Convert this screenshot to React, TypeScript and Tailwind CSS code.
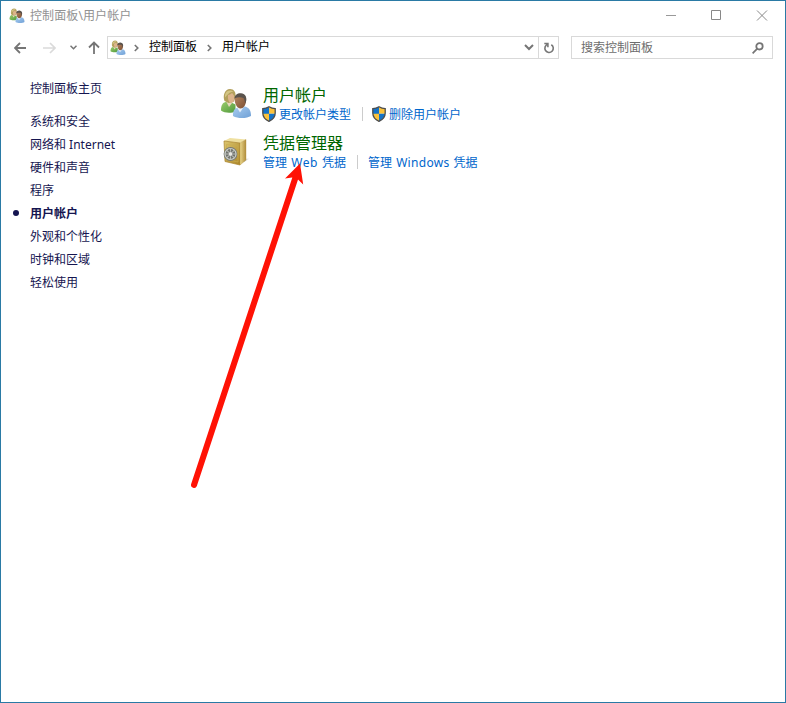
import React from "react";

function Users({ size }: { size: number }) {
  return (
    <svg width={size} height={size} viewBox="0 0 32 32" className="block shrink-0">
      <defs>
        <linearGradient id="green" x1="0" y1="0" x2="1" y2="1">
          <stop offset="0" stopColor="#9bcb6c" />
          <stop offset="1" stopColor="#4f9a3c" />
        </linearGradient>
        <linearGradient id="blue" x1="0" y1="0" x2="1" y2="1">
          <stop offset="0" stopColor="#a9cdf0" />
          <stop offset="1" stopColor="#6fa0d6" />
        </linearGradient>
        <linearGradient id="skin" x1="0" y1="0" x2="1" y2="1">
          <stop offset="0" stopColor="#b98a62" />
          <stop offset="1" stopColor="#7a4e33" />
        </linearGradient>
      </defs>
      <path d="M1 22.500c0-4.500 1-7.500 4.500-8.500l6 .5 4 2v7c-4 1.800-11 1.800-14.500-1z" fill="url(#green)" />
      <path d="M6 13l3 6 3-4z" fill="#e8d6bd" />
      <path d="M4.500 13C2.500 8 4.500 1 10 1c4 0 6 3 5.500 8l-2 5-5 1z" fill="#b3a05c" />
      <path d="M8 7c1 0 3-1 4-2 1 1 2 2 2.500 4 0 3-1.500 6-3.500 6S7.500 11 8 7z" fill="#dcb48c" />
      <path d="M5 7c1-4.500 5-5.500 8.500-3.500-3 0-5.500 2-8.500 6z" fill="#d3c585" />
      <path d="M13 28c-.5-5 1.500-7.500 5-8.500l7-1c4 1 6 4 6 9.500-4 2.500-13 3-18 0z" fill="url(#blue)" />
      <path d="M17 19.500l3 5 4-6z" fill="#e7f1fb" />
      <path d="M14.500 11.500c0-4 3-6 6.500-5.500 3.500.5 6 3 5 7.500-.5 4-2.500 7-5.500 7s-5.500-4-6-9z" fill="url(#skin)" />
      <path d="M14.500 10.500c0-3.500 3-5.500 6.500-5.300 4 .3 6.300 3.800 5 8.300l-.8 2c-.4-2.500-.8-4.500-1.800-5.500-2.500-1-6-1-8.900.5z" fill="#5a534d" />
    </svg>
  );
}

function Safe() {
  return (
    <svg width="32" height="32" viewBox="-1 0 32 32" className="block shrink-0">
      <defs>
        <linearGradient id="front" x1="0" y1="0" x2="1" y2="1">
          <stop offset="0" stopColor="#dcc66e" />
          <stop offset="1" stopColor="#ab8528" />
        </linearGradient>
        <linearGradient id="side" x1="0" y1="0" x2="1" y2="0">
          <stop offset="0" stopColor="#ead78c" />
          <stop offset="1" stopColor="#b08c3a" />
        </linearGradient>
        <linearGradient id="shade" x1="0" y1="0" x2="1" y2="0">
          <stop offset="0" stopColor="#aaa" />
          <stop offset="1" stopColor="#fff" stopOpacity="0" />
        </linearGradient>
      </defs>
      <path d="M23 26l7-4-6 1z" fill="url(#shade)" />
      <path d="M3 5l6-3 16 1.500-6 3.500z" fill="#efe0a0" />
      <path d="M3 5l16 2v22L4 25.500z" fill="url(#front)" stroke="#a8822b" strokeWidth=".7" />
      <path d="M19 7l6-3.500V24l-6 5z" fill="url(#side)" stroke="#b69541" strokeWidth=".4" />
      <path d="M5.500 8.500l11.500 1.500v16L5.500 23.500z" fill="none" stroke="#c9ac50" strokeWidth=".7" />
      <circle cx="9.500" cy="18" r="6.900" fill="#777a75" />
      <circle cx="9.500" cy="18" r="5.500" fill="#70736e" stroke="#cfd2cc" strokeWidth="1.200" />
      <path d="M9.500 12.500v11M4 18h11M5.600 14.100l7.800 7.800M13.400 14.100l-7.800 7.800" stroke="#b8bbb4" strokeWidth="1.100" />
      <circle cx="9.500" cy="18" r="2.300" fill="#e6e7e2" stroke="#777" strokeWidth=".6" />
    </svg>
  );
}

function Shield() {
  return (
    <svg width="14" height="16" viewBox="0 0 14 16" className="block shrink-0">
      <path d="M7 .8C5 2 3 2.600.8 2.700V7c0 4 2.700 6.800 6.200 8.300z" fill="#1473c9" />
      <path d="M7 .8c2 1.200 4 1.800 6.200 1.900V7.700H7z" fill="#fcc23a" />
      <path d="M.8 7.700H7v7.600C3.500 13.800 1.200 11.500.8 7.700z" fill="#fcc23a" />
      <path d="M7 7.700h6.200c-.4 3.800-2.700 6.100-6.200 7.600z" fill="#1473c9" />
      <path d="M7 .8c2 1.200 4 1.800 6.200 1.900V7c0 4-2.700 6.800-6.200 8.300C3.500 13.800.8 11 .8 7V2.700C3 2.600 5 2 7 .8z" fill="none" stroke="#4d4d4d" strokeWidth="1.300" />
    </svg>
  );
}

function Glyph({ d, w, h, color = "#757575", sw = 1.8 }: { d: string; w: number; h: number; color?: string; sw?: number }) {
  return (
    <svg width={w} height={h} viewBox={`0 0 ${w} ${h}`} className="block shrink-0" fill="none" stroke={color} strokeWidth={sw}>
      <path d={d} />
    </svg>
  );
}

const categories = ["系统和安全", "网络和 Internet", "硬件和声音", "程序", "用户帐户", "外观和个性化", "时钟和区域", "轻松使用"];

export default function App() {
  return (
    <div className="relative flex h-[703px] w-[786px] flex-col overflow-hidden border border-[#2a7aa5] bg-white font-['Noto_Sans','Noto_Sans_CJK_SC',sans-serif] text-[12px] leading-[23px] whitespace-nowrap text-black">
      <header className="flex h-[29px] shrink-0 items-center pl-2">
        <Users size={16} />
        <span className="ml-[5px] tracking-[0.1px] text-[#929292]">控制面板\用户帐户</span>
        <div className="mr-[17px] ml-auto flex items-center gap-[34px]">
          <Glyph w={11} h={11} d="M0 5.500h10" color="#999" sw={1} />
          <Glyph w={11} h={11} d="M.5.5h9v9H.5z" color="#888" sw={1} />
          <Glyph w={12} h={12} d="M1 .5l10 10M11 .5l-10 10" color="#888" sw={1} />
        </div>
      </header>

      <nav className="mt-[6px] flex h-[23px] shrink-0 items-center">
        <div className="flex w-[106px] items-center pl-[13px]">
          <Glyph w={13} h={12} d="M12 6H1M6 1L1 6l5 5" />
          <span className="ml-[16px]"><Glyph w={13} h={12} d="M0 6h12M7 1l5 5-5 5" color="#dadada" sw={1.6} /></span>
          <span className="ml-[14px]"><Glyph w={7} h={5} d="M.5.8l3 3 3-3" sw={1.500} /></span>
          <span className="ml-[11px]"><Glyph w={12} h={13} d="M6 13V1.500M1 6.500l5-5 5 5" /></span>
        </div>
        <div className="flex h-[23px] w-[452px] items-center border border-[#d9d9d9] pl-[2px]">
          <Users size={16} />
          <span className="ml-[8px]"><Glyph w={5} h={8} d="M.8 1l3 3-3 3" sw={1.600} /></span>
          <span className="ml-[10px] pb-[2px]">控制面板</span>
          <span className="ml-[10px]"><Glyph w={5} h={8} d="M.8 1l3 3-3 3" sw={1.600} /></span>
          <span className="ml-[10px] pb-[2px]">用户帐户</span>
          <span className="mr-[4px] ml-auto"><Glyph w={10} h={7} d="M1 1l4 4 4-4" sw={2} /></span>
          <div className="flex h-[21px] w-[20px] items-center justify-center border-l border-[#d9d9d9]">
            <svg width="12" height="12" viewBox="0 0 12 12" fill="none" stroke="#777" strokeWidth="1.600">
              <path d="M4.700 2.300A4.200 4.200 0 1 0 8.300 2.700M1.300 1.500H4.900V5.200" />
            </svg>
          </div>
        </div>
        <div className="ml-[12px] flex h-[23px] w-[202px] items-center border border-[#d9d9d9] pr-[8px] pl-[9px] text-[#6d6d6d]">
          <span>搜索控制面板</span>
          <svg className="ml-auto" width="12" height="12" viewBox="0 0 12 12" fill="none" stroke="#757575" strokeWidth="1.800">
            <circle cx="7.500" cy="4.300" r="3.200" />
            <path d="M5.300 6.700L.6 11.300" />
          </svg>
        </div>
      </nav>

      <main className="flex flex-1">
        <aside className="w-[219px] pt-[18px] pl-[29px] text-[#151550]">
          <div>控制面板主页</div>
          <ul className="mt-[10px]">
            {categories.map((name) => (
              <li key={name} className={name === "用户帐户" ? "-ml-[17px] flex items-center font-bold" : ""}>
                {name === "用户帐户" && <span className="mr-[11px] mb-px h-[6px] w-[6px] rounded-full bg-[#151550]" />}
                {name}
              </li>
            ))}
          </ul>
        </aside>
        <div className="pt-[27px]">
          <section className="flex h-[48px]">
            <div className="pt-[2px]"><Users size={32} /></div>
            <div className="ml-[11px]">
              <h2 className="h-[19px] text-[16px] leading-[19px] text-[#006600]">用户帐户</h2>
              <div className="flex h-[18px] items-center text-[#0066cc]">
                <span className="-ml-px"><Shield /></span>
                <span className="ml-[3px]">更改帐户类型</span>
                <i className="mr-[9px] ml-[11px] h-[14px] w-px bg-[#ccc]" />
                <Shield />
                <span className="ml-[3px]">删除用户帐户</span>
              </div>
            </div>
          </section>
          <section className="flex h-[48px]">
            <div className="pt-[2px]"><Safe /></div>
            <div className="ml-[11px]">
              <h2 className="h-[19px] text-[16px] leading-[19px] text-[#006600]">凭据管理器</h2>
              <div className="flex h-[18px] items-center text-[#0066cc] [word-spacing:1px]">
                <span className="w-[83px]">管理 <span className="tracking-[0.6px]">Web</span> 凭据</span>
                <i className="mr-[10px] ml-[11px] h-[14px] w-px bg-[#ccc]" />
                <span>管理 <span className="tracking-[0.3px]">Windows</span> 凭据</span>
              </div>
            </div>
          </section>
        </div>
      </main>

      <svg className="pointer-events-none absolute -top-px -left-px" width="320" height="500" viewBox="0 0 320 500">
        <path d="M194 485L296 176" stroke="#ff1205" strokeWidth="6" strokeLinecap="round" />
        <path d="M300 163.500L303.200 184.500L298 179.500L292 177.500L285 178.500z" fill="#ff1205" />
      </svg>
    </div>
  );
}
